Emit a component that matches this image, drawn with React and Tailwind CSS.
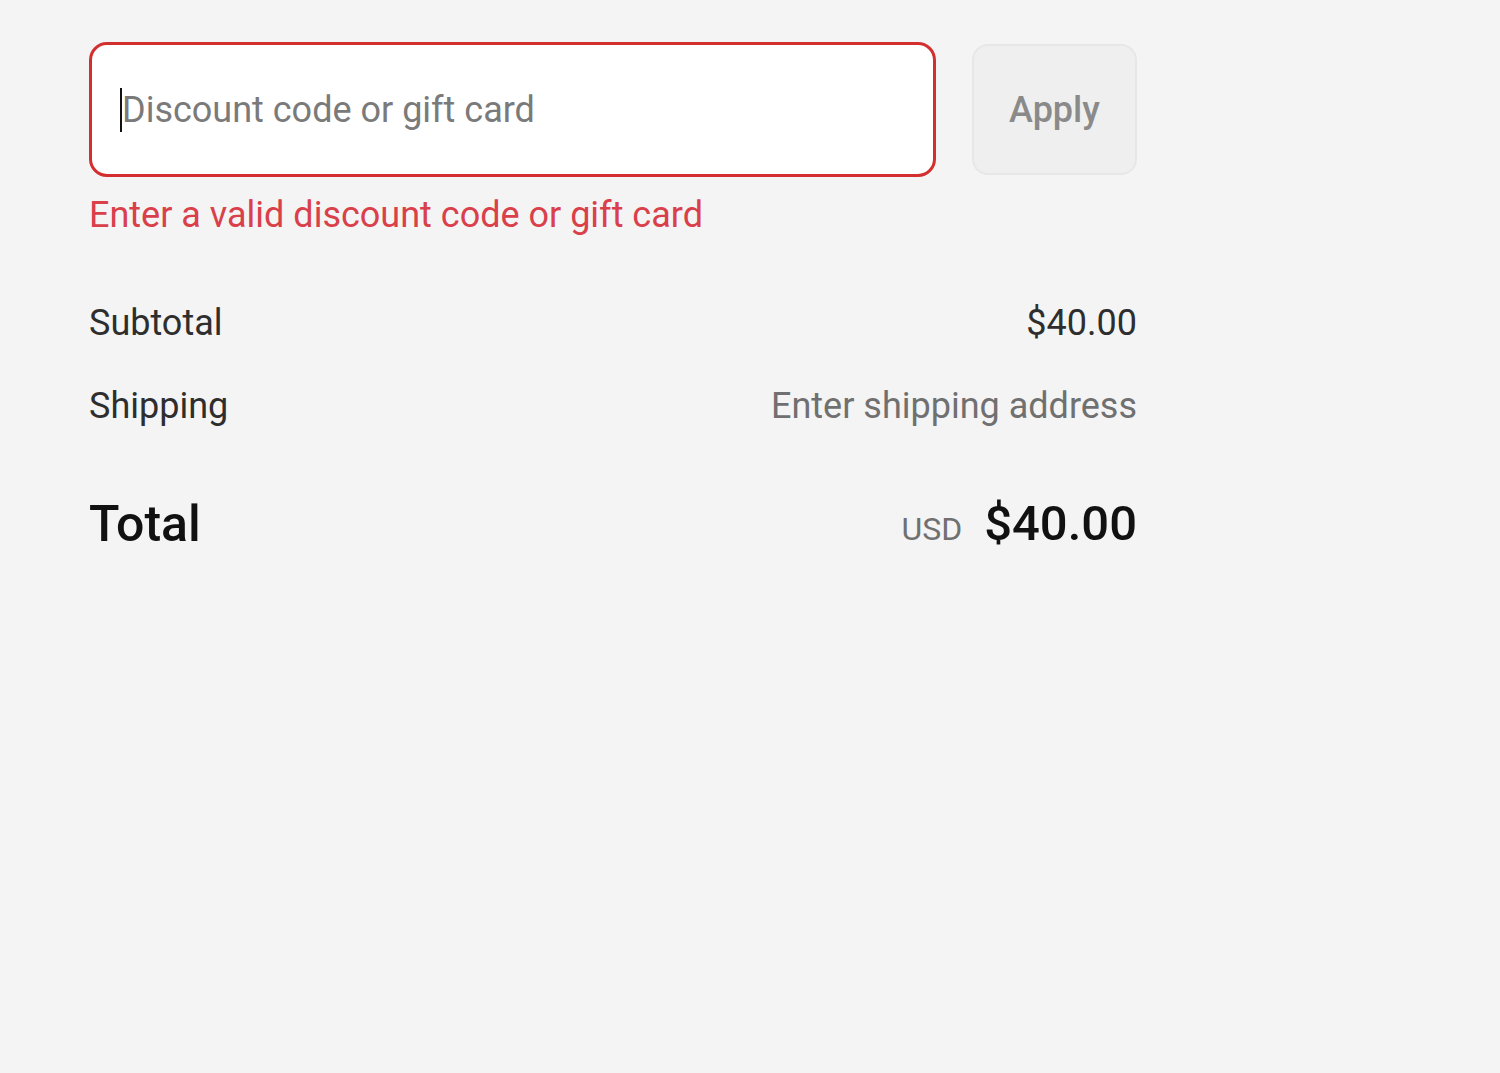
import React, { useState } from "react";

const SummaryRow = ({ label, value, muted }) => (
  <div className="flex items-center justify-between">
    <span className="text-[36px] leading-[44px] text-[#2e2e2e]">{label}</span>
    <span
      className={`text-[36px] leading-[44px] ${
        muted ? "text-[#707070]" : "text-[#2e2e2e]"
      }`}
    >
      {value}
    </span>
  </div>
);

export default function App() {
  const [code, setCode] = useState("");

  return (
    <div
      className="min-h-screen bg-[#f4f4f4] pt-[42px] pl-[89px]"
      style={{ fontFamily: "Roboto, 'Noto Sans', sans-serif" }}
    >
      <div className="w-[1048px] flex flex-col">
        {/* Discount code */}
        <div className="flex items-center gap-[36px]">
          <div className="relative flex-1">
            <input
              type="text"
              value={code}
              onChange={(e) => setCode(e.target.value)}
              placeholder="Discount code or gift card"
              className="w-full h-[135px] bg-white border-[3px] border-[#d32f2f] rounded-[18px] pl-[30px] pr-4 text-[36px] text-[#333333] placeholder-[#7a7a7a] outline-none"
            />
            {code === "" && (
              <span className="absolute left-[31px] top-[46px] h-[44px] w-[2px] bg-[#111111]" />
            )}
          </div>
          <button className="w-[165px] h-[131px] rounded-[16px] border-2 border-[#e7e7e7] bg-[#efefef] text-[36px] font-medium text-[#8a8a8a]">
            Apply
          </button>
        </div>
        <p className="mt-[16px] text-[36px] leading-[44px] text-[#d9404a]">
          Enter a valid discount code or gift card
        </p>

        {/* Summary */}
        <div className="mt-[64px] flex flex-col gap-[39px]">
          <SummaryRow label="Subtotal" value="$40.00" />
          <SummaryRow label="Shipping" value="Enter shipping address" muted />
        </div>

        <div className="mt-[67px] flex items-center justify-between">
          <span className="text-[50px] leading-[58px] font-medium text-[#111111]">
            Total
          </span>
          <div className="flex items-baseline gap-[22px]">
            <span className="text-[32px] text-[#707070]">USD</span>
            <span className="text-[49px] leading-[58px] font-medium text-[#111111]">
              $40.00
            </span>
          </div>
        </div>
      </div>
    </div>
  );
}
